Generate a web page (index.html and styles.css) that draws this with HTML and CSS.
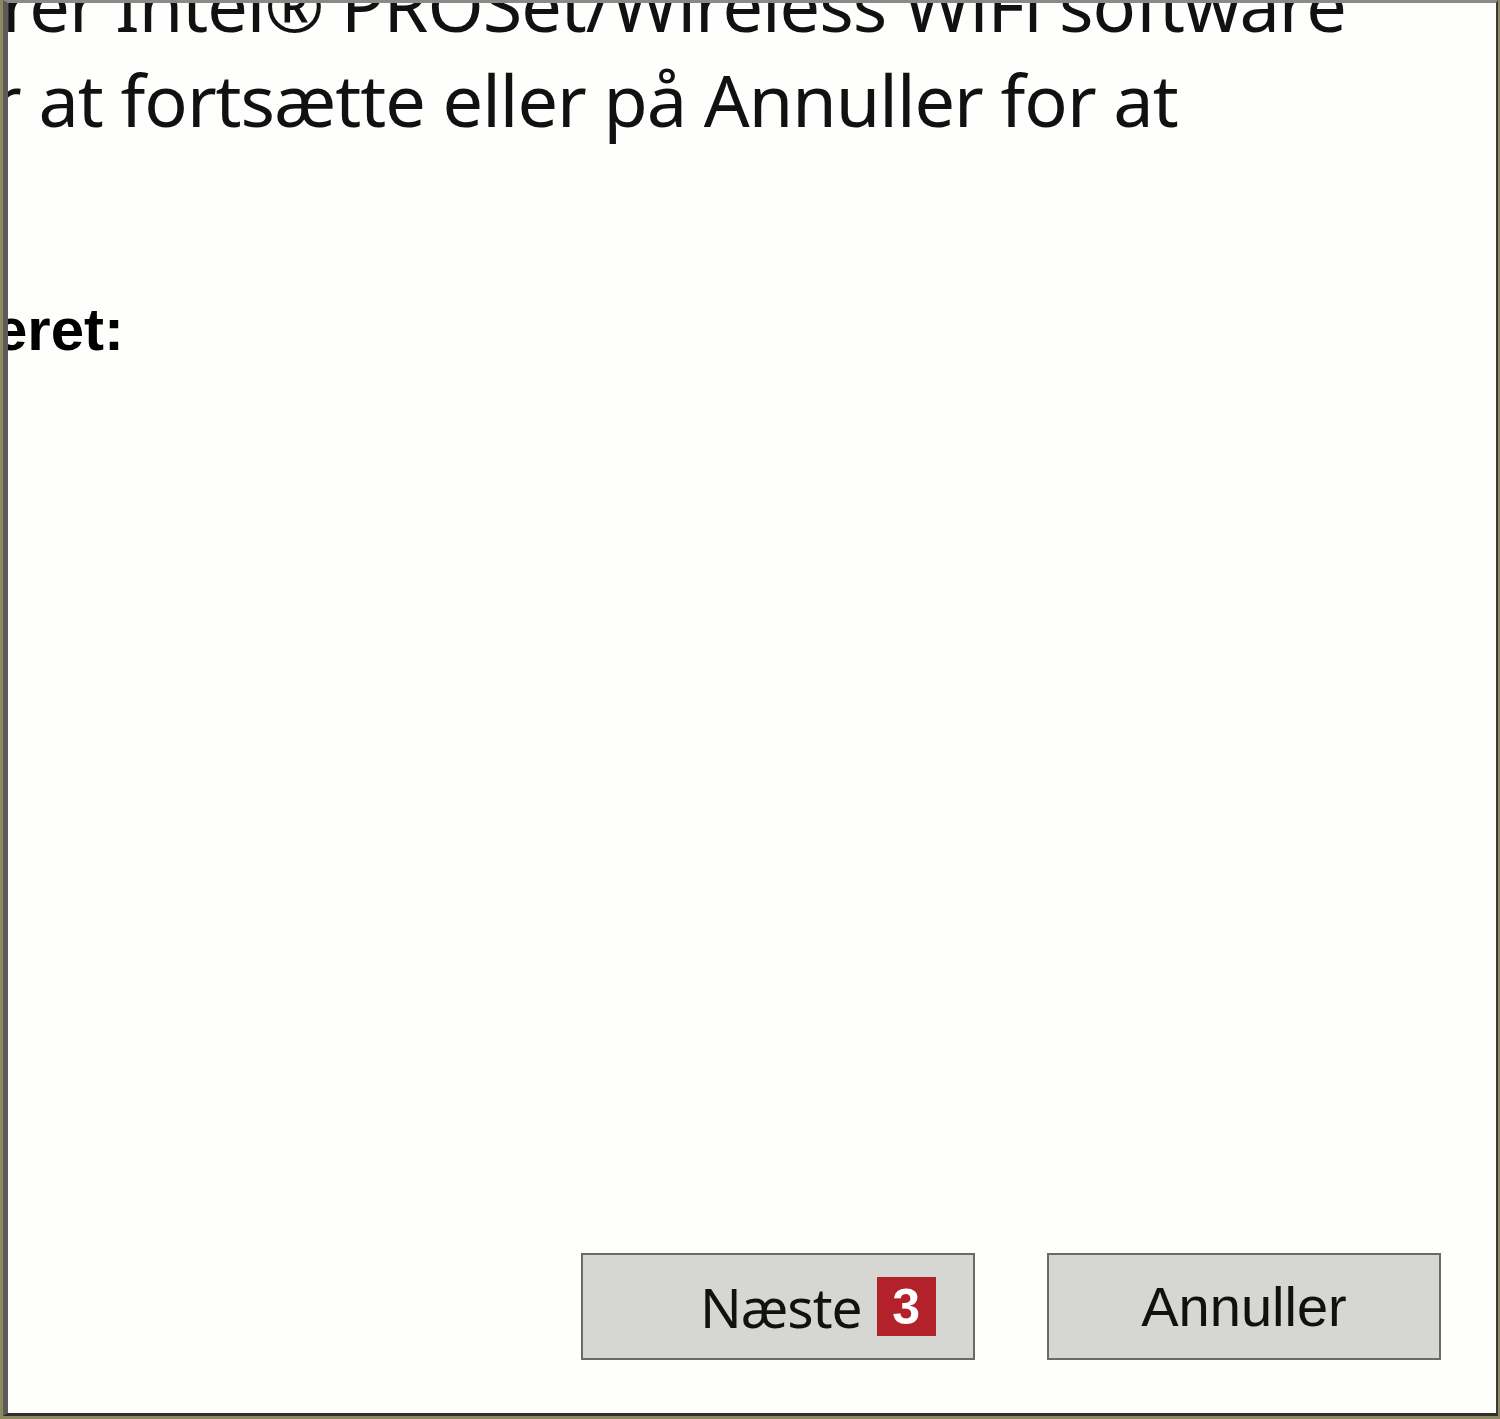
FILE: index.html
```html
<!DOCTYPE html>
<html lang="da">
<head>
<meta charset="utf-8">
<title>Intel PROSet/Wireless WiFi software</title>
<link rel="stylesheet" href="styles.css">
</head>
<body>
<div class="window">
  <div class="content">
    <p class="line line-1">rer Intel® PROSet/Wireless WiFi software</p>
    <p class="line line-2">r at fortsætte eller på Annuller for at</p>
    <p class="heading">eret:</p>
    <div class="spacer"></div>
    <div class="buttons">
      <button class="btn btn-next"><span class="label">Næste</span><span class="badge">3</span></button>
      <button class="btn btn-cancel"><span class="label">Annuller</span></button>
    </div>
  </div>
</div>
</body>
</html>
```

FILE: styles.css
```css
html, body {
  margin: 0;
  padding: 0;
}
body {
  width: 1500px;
  height: 1419px;
  overflow: hidden;
  background: #8c8862;
}
.window {
  box-sizing: border-box;
  margin-left: 3px;
  width: 1495px;
  height: 1416px;
  background: #fefefc;
  border-top: 3px solid #8a8a88;
  border-left: 5px solid #5b5b58;
  border-right: 2px solid #3a3a38;
  border-bottom: 3px solid #2e2e2c;
  overflow: hidden;
}
.content {
  height: 100%;
  display: flex;
  flex-direction: column;
}
.line {
  margin: 0;
  white-space: nowrap;
  font-family: "Noto Sans", "Open Sans", sans-serif;
  font-size: 72px;
  letter-spacing: -1px;
  color: #111;
  line-height: 95px;
}
.line-1 {
  margin-top: -46px;
  margin-left: -6px;
}
.line-2 {
  margin-left: -16px;
}
.heading {
  margin: 148px 0 0 -14px;
  white-space: nowrap;
  font-family: "Liberation Sans", Arial, sans-serif;
  font-weight: bold;
  font-size: 60px;
  line-height: 70px;
  color: #000;
}
.spacer {
  flex: 1;
}
.buttons {
  display: flex;
  justify-content: flex-end;
  gap: 72px;
  padding: 0 55px 53px 0;
}
.btn {
  box-sizing: border-box;
  width: 394px;
  height: 107px;
  background: #d6d7d3;
  border: 2px solid #6a6a68;
  margin: 0;
  padding: 0;
  display: flex;
  align-items: center;
  color: #111;
}
.btn-next {
  justify-content: flex-start;
  padding-left: 117px;
  gap: 15px;
  font-family: "Noto Sans", "Open Sans", sans-serif;
  font-size: 55px;
  letter-spacing: -1px;
}
.btn-cancel {
  justify-content: center;
  font-family: "Liberation Sans", Arial, sans-serif;
  font-size: 56px;
}
.badge {
  display: inline-flex;
  align-items: center;
  justify-content: center;
  width: 59px;
  height: 59px;
  background: #b3222b;
  color: #fff;
  font-family: "Liberation Sans", Arial, sans-serif;
  font-weight: bold;
  font-size: 50px;
  letter-spacing: 0;
  line-height: 1;
}
```
